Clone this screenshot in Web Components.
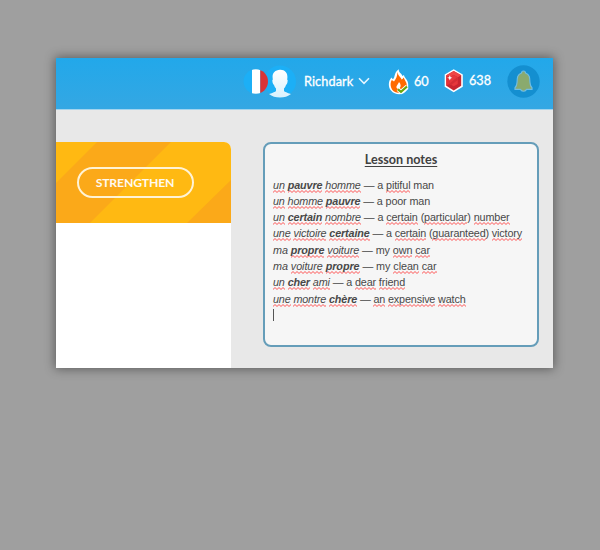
<!DOCTYPE html>
<html lang="en">
<head>
<meta charset="utf-8">
<title>Lesson notes</title>
<style>
body{margin:0;height:550px;display:flow-root;background:#9f9f9f;font-family:Lato,"Open Sans",sans-serif;overflow:hidden}
</style>
</head>
<body>
<app-window>
  <top-bar slot="header"></top-bar>
  <practice-card></practice-card>
  <notes-panel heading="Lesson notes">
    <note-line fit="161"><i><spell-mark>un</spell-mark> <b><spell-mark>pauvre</spell-mark></b> <spell-mark>homme</spell-mark></i> — a <spell-mark>pitiful</spell-mark> man</note-line>
    <note-line fit="157"><i><spell-mark>un</spell-mark> <spell-mark>homme</spell-mark> <b><spell-mark>pauvre</spell-mark></b></i> — a poor man</note-line>
    <note-line fit="236.5"><i><spell-mark>un</spell-mark> <b><spell-mark>certain</spell-mark></b> <spell-mark>nombre</spell-mark></i> — a <spell-mark>certain</spell-mark> (<spell-mark>particular</spell-mark>) <spell-mark>number</spell-mark></note-line>
    <note-line fit="249"><i><spell-mark>une</spell-mark> <spell-mark>victoire</spell-mark> <b><spell-mark>certaine</spell-mark></b></i> — a <spell-mark>certain</spell-mark> (<spell-mark>guaranteed</spell-mark>) <spell-mark>victory</spell-mark></note-line>
    <note-line fit="157"><i>ma <b><spell-mark>propre</spell-mark></b> <spell-mark>voiture</spell-mark></i> — my <spell-mark>own</spell-mark> <spell-mark>car</spell-mark></note-line>
    <note-line fit="163.5"><i>ma <spell-mark>voiture</spell-mark> <b><spell-mark>propre</spell-mark></b></i> — my <spell-mark>clean</spell-mark> <spell-mark>car</spell-mark></note-line>
    <note-line fit="132"><i><spell-mark>un</spell-mark> <b><spell-mark>cher</spell-mark></b> <spell-mark>ami</spell-mark></i> — a <spell-mark>dear</spell-mark> <spell-mark>friend</spell-mark></note-line>
    <note-line fit="192.5"><i><spell-mark>une</spell-mark> <spell-mark>montre</spell-mark> <b><spell-mark>chère</spell-mark></b></i> — <spell-mark>an</spell-mark> <spell-mark>expensive</spell-mark> <spell-mark>watch</spell-mark></note-line>
  </notes-panel>
</app-window>
<script>
const define = (name, html, ready) => {
  const t = document.createElement('template');
  t.innerHTML = html;
  customElements.define(name, class extends HTMLElement {
    constructor() {
      super();
      this.attachShadow({mode: 'open'}).append(t.content.cloneNode(true));
    }
    connectedCallback() { if (ready) ready(this, this.shadowRoot); }
  });
};

// Inline word with a red zigzag under it
define('spell-mark', `<style>
:host{display:inline;padding-bottom:2px;background:url("data:image/svg+xml,%3Csvg xmlns='http://www.w3.org/2000/svg' width='4' height='3'%3E%3Cpath d='M-1 3.5L0 2.5L2 .5L4 2.5L5 3.5' fill='none' stroke='%23ff3030' stroke-width='.85'/%3E%3C/svg%3E") 0 100% repeat-x}
</style><slot></slot>`);

define('notes-panel', `<style>
:host{display:block;box-sizing:border-box;width:276px;height:205px;border:2px solid #659db9;border-radius:8px;background:#f6f6f6;padding:7px 8px 0}
h2{margin:0 0 7.5px;text-align:center;font:bold 12.6px/18px Lato,sans-serif;color:#414141;text-decoration:underline;text-decoration-thickness:1px;text-underline-offset:2px}
.body{font:10.8px "Liberation Sans",Arial,sans-serif;color:#484848}
.caret{width:1px;height:12px;background:#555;margin-top:2px}
</style><h2></h2><div class="body"><slot></slot><div class="caret"></div></div>`, (el, root) => {
  root.querySelector('h2').textContent = el.getAttribute('heading');
});

define('practice-card', `<style>
:host{display:block;width:175px;height:226px;background:#fff;border-top-right-radius:7px;overflow:hidden}
.banner{height:81px;display:grid;place-items:center;background:#ffb912}
.banner>*{grid-area:1/1}
button{box-sizing:border-box;width:117px;height:31px;margin:0 0 0 -17px;padding:0;border:2px solid #fff3d5;border-radius:16px;background:none;color:#fffaf0;font:bold 12.2px/27px Lato,sans-serif;letter-spacing:-.15px}
</style>
<div class="banner"><svg width="175" height="81"><path d="M0 41L41 0H115L34 81H0ZM175 38V81H131Z" fill="#fba919"/></svg><button>STRENGTHEN</button></div>`);

define('user-badge', `<style>:host{display:block;height:36px}svg{display:block}</style>
<svg width="54" height="36" viewBox="243 64 54 36">
<defs><clipPath id="c"><circle cx="255.8" cy="81.5" r="12.2"/></clipPath><linearGradient id="g" x2="0" y2="1"><stop stop-color="#fff"/><stop offset="1" stop-color="#d9f1fd"/></linearGradient></defs>
<circle cx="280" cy="81.5" r="16" fill="#1caff6"/>
<g clip-path="url(#c)"><path d="M243 69H252V94H243Z" fill="#1caff6"/><path d="M252 69H260.3V94H252Z" fill="#fff"/><path d="M260.3 69H269V94H260.3Z" fill="#d93336"/></g>
<path d="M280 69.8C284.8 69.6 287.7 73 287.4 77.2L287.2 79.6Q288.2 80 287.3 83Q286.7 84.6 286 85Q285.2 87.7 284 88.6V91Q285 92.2 291 94Q286.5 97.5 280 97.5T269 94Q275 92.2 276 91V88.6Q274.8 87.7 274 85Q273.3 84.6 272.7 83Q271.8 80 272.8 79.6L272.6 77.2C272.3 73 275.2 70 280 69.8Z" fill="url(#g)"/></svg>`);

define('top-bar', `<style>
:host{display:flex;align-items:center;box-sizing:border-box;height:52px;padding:0 0 2px 187px;background:linear-gradient(#22a8ea,#34a7e3);border-bottom:1px solid #a3d4ee;color:#fff;font:400 12.7px/20px Lato,sans-serif;-webkit-text-stroke:.3px #fff}
svg{display:block;flex:none}
user-badge{margin-top:-2px}
.t{white-space:nowrap;margin-top:-3px}
.name{width:50px;margin-left:7px;letter-spacing:.1px}
.chev{margin:-3px 18px 0 4px}
.streak{width:15px;margin-left:4px}
.gem{margin:-3px 0 0 15px}
.count{margin:-5px 0 0 5px;width:22px}
.bell{margin:-3px 0 0 15.5px}
</style>
<user-badge></user-badge>
<span class="t name">Richdark</span>
<svg class="chev" width="12" height="8"><path d="M1 1.3L6 6.3L11 1.3" fill="none" stroke="#e6f6ff" stroke-width="1.6"/></svg>
<svg width="22" height="28" viewBox="388 67 22 28" style="margin-top:-2px"><path d="M398.8 68.2C394 71 395.4 76 393 78.2Q392 77.5 391.5 76.5C388 80 388.2 86.5 391 89.5C394.5 94 402 94.3 405.2 91L408.2 88V83.5C408.4 79 404 76.5 404 74L402.4 75C401.8 72 398.5 72 398.8 68.2Z" fill="#fff"/><path d="M397.5 71C397.3 75.5 396 78 394 80.5L391.8 79C389 83 391 91.5 398 91.7C404.5 91.5 407.7 86 406.4 82Q405 79.2 403.6 76.5Q402.6 78.5 401.6 78.5C400.7 76 398 75 397.5 71Z" fill="#ff6a00"/><path d="M399 81C400.8 83 401.4 85.5 399.6 87.2Q398 88.2 396.9 87.2C395.4 85.6 398 83.5 399 81Z" fill="#fff"/><path d="M398 88.3L401 90.8L407 85.5" fill="none" stroke="#fff" stroke-width="4"/><path d="M398 88.3L401 90.8L407 85.5" fill="none" stroke="#6ba60a" stroke-width="2.3"/></svg>
<span class="t streak">60</span>
<svg class="gem" width="20" height="24" viewBox="444 69 20 24"><path d="M453.7 69.2L462.8 74.4V86.7L453.7 92.3L444.7 86.7V74.4Z" fill="#fff"/><path d="M453.7 71L461.2 75.3V85.8L453.7 90.5L446.3 85.8V75.3Z" fill="#c92630"/><path d="M453.7 71L461.2 75.3L457.8 77.2L453.7 75L449.5 77.2L446.3 75.3Z" fill="#ee4546"/><path d="M446.3 75.3L449.5 77.2V84L446.3 85.8Z" fill="#e73036"/><path d="M453.7 75L457.8 77.2V84L453.7 86.3L449.5 84V77.2Z" fill="#e6383c"/><path d="M449.5 83.5L457.5 77L457.8 80L451 85Z" fill="#d42e35"/><path d="M449.8 75.2L450.6 77.2L452.3 77.8L450.6 78.5L449.8 80.5L449 78.5L447.2 77.8L449 77.2Z" fill="#fff"/></svg>
<span class="t count">638</span>
<svg class="bell" width="33" height="33" viewBox="506.5 65 33 33"><circle cx="523" cy="81.5" r="16.2" fill="#148fd0"/><path d="M523 71Q525 71 525 73C529.3 74.3 529.3 78 529.4 82Q529.6 86 531.5 87.8V89.3H526.2Q523 93.2 519.8 89.3H514.5V87.8Q516.4 86 516.6 82C516.7 78 516.7 74.3 521 73Q521 71 523 71Z" fill="#8aaa6e" stroke="#70bce2" stroke-width="1.2"/></svg>`);

define('app-window', `<style>
:host{display:flex;flex-direction:column;width:497px;height:310px;margin:58px 0 0 56px;background:#e8e8e8;box-shadow:0 0 10px 1px rgba(0,0,0,.42)}
main{display:flex;justify-content:space-between;padding:32px 14px 0 0}
</style><slot name="header"></slot><main><slot></slot></main>`);

// One note; letter spacing is tuned so the line takes the width in "fit".
// Defined last, because it measures text in the font the panel sets.
define('note-line', `<style>
:host{display:block;height:16.3px;line-height:16.3px;white-space:nowrap}
span{display:inline-block}
</style><span><slot></slot></span>`, (el, root) => {
  const s = root.querySelector('span');
  const n = el.textContent.length;
  s.style.letterSpacing = ((+el.getAttribute('fit') - s.getBoundingClientRect().width) / n) + 'px';
});
</script>
</body>
</html>
